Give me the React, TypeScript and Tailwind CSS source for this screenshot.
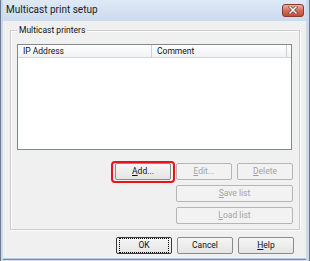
import React from 'react';

const font = { fontFamily: 'Roboto, "Liberation Sans", Arial, sans-serif' };

function Btn({
  children,
  disabled,
  isDefault,
  className = '',
}: {
  children: React.ReactNode;
  disabled?: boolean;
  isDefault?: boolean;
  className?: string;
}) {
  const base =
    'h-[17px] flex items-center justify-center text-[8.5px] leading-none rounded-[2px] border';
  const look = disabled
    ? 'border-[#b5b5b5] bg-[#f2f2f2] text-[#a3a3a3]'
    : isDefault
    ? 'border-[#3a3a3a] bg-gradient-to-b from-[#f6f6f6] to-[#e4e4e4] text-[#111]'
    : 'border-[#8c8c8c] bg-gradient-to-b from-[#f6f6f6] to-[#e4e4e4] text-[#111]';
  return (
    <div className={`${base} ${look} ${className}`}>
      {isDefault ? (
        <div className="w-full h-full m-[2px] flex items-center justify-center border border-dotted border-black">
          {children}
        </div>
      ) : (
        children
      )}
    </div>
  );
}

export default function App() {
  return (
    <div
      className="w-[310px] h-[261px] flex flex-col bg-[#c9d8ec] border-l border-r border-[#6b7a8f] pl-[2px] pr-[3px]"
      style={font}
    >
      {/* Title bar */}
      <div className="h-[21px] flex items-center justify-between pl-[3px] pr-[2px] bg-gradient-to-b from-[#dfe9f6] to-[#cbdaee]">
        <span className="text-[10px] text-[#1b1b1b] leading-none pb-[1px]">Multicast print setup</span>
        <div className="w-[22px] h-[13px] mb-[1px] rounded-[3px] border border-[#8a3a2e] bg-gradient-to-b from-[#eab0a4] via-[#d46e5a] to-[#c24a34] flex items-center justify-center">
          <svg width="10" height="8" viewBox="0 0 10 8">
            <path d="M2 1 L8 7 M8 1 L2 7" stroke="#6a3a30" strokeWidth="2.8" strokeLinecap="square" />
            <path d="M2 1 L8 7 M8 1 L2 7" stroke="#ffffff" strokeWidth="1.5" strokeLinecap="square" />
          </svg>
        </div>
      </div>

      {/* Client area */}
      <div className="h-[237px] bg-[#f0f0f0] flex flex-col text-[#111]">
        {/* Group box */}
        <div className="relative mt-[9px] ml-[7px] w-[290px] h-[200px] border border-[#cdcdcd] shadow-[inset_1px_1px_0_#ffffff,1px_1px_0_#ffffff] flex flex-col">
          <span className="absolute left-[6px] top-[-6px] px-[2px] bg-[#f0f0f0] text-[8.5px] leading-[11px]">
            Multicast printers
          </span>

          {/* List view */}
          <div className="mt-[13px] ml-[6px] w-[275px] h-[106px] border border-[#828790] bg-white flex flex-col">
            <div className="h-[13px] flex bg-gradient-to-b from-[#ffffff] to-[#f1f2f4] border-b border-[#d5d5d5] text-[8.5px] leading-none">
              <div className="w-[134px] flex items-center pl-[5px] border-r border-[#d0d0d0]">IP Address</div>
              <div className="w-[135px] flex items-center pl-[5px] border-r border-[#d0d0d0]">Comment</div>
              <div className="flex-1" />
            </div>
          </div>

          {/* Buttons */}
          <div className="mt-[13px] flex flex-col items-end pr-[6px] gap-[5px]">
            <div className="flex gap-[5px]">
              <div className="relative">
                <Btn className="w-[56px]">
                  <span>
                    <u className="underline-offset-1">A</u>dd...
                  </span>
                </Btn>
                <div className="absolute top-[-2px] bottom-[-3px] left-[-4px] right-[-4px] border-2 border-[#e8141b] rounded-[4px]" />
              </div>
              <Btn className="w-[56px]" disabled>
                <span>
                  <u className="underline-offset-1">E</u>dit...
                </span>
              </Btn>
              <Btn className="w-[56px]" disabled>
                <span>
                  <u className="underline-offset-1">D</u>elete
                </span>
              </Btn>
            </div>
            <Btn className="w-[117px]" disabled>
              <span>
                <u className="underline-offset-1">S</u>ave list
              </span>
            </Btn>
            <Btn className="w-[117px]" disabled>
              <span>
                <u className="underline-offset-1">L</u>oad list
              </span>
            </Btn>
          </div>
        </div>

        {/* Dialog buttons */}
        <div className="mt-[7px] flex justify-end gap-[5px] pr-[12px]">
          <Btn className="w-[56px]" isDefault>
            <span>OK</span>
          </Btn>
          <Btn className="w-[56px]">
            <span>Cancel</span>
          </Btn>
          <Btn className="w-[56px]">
            <span>
              <u className="underline-offset-1">H</u>elp
            </span>
          </Btn>
        </div>
      </div>

      {/* Bottom frame */}
      <div className="flex-1 flex flex-col">
        <div className="h-[1px] bg-[#b9cbe2]" />
        <div className="h-[1px] bg-[#33a3d6]" />
        <div className="flex-1 bg-[#cfe0f0]" />
      </div>
    </div>
  );
}
